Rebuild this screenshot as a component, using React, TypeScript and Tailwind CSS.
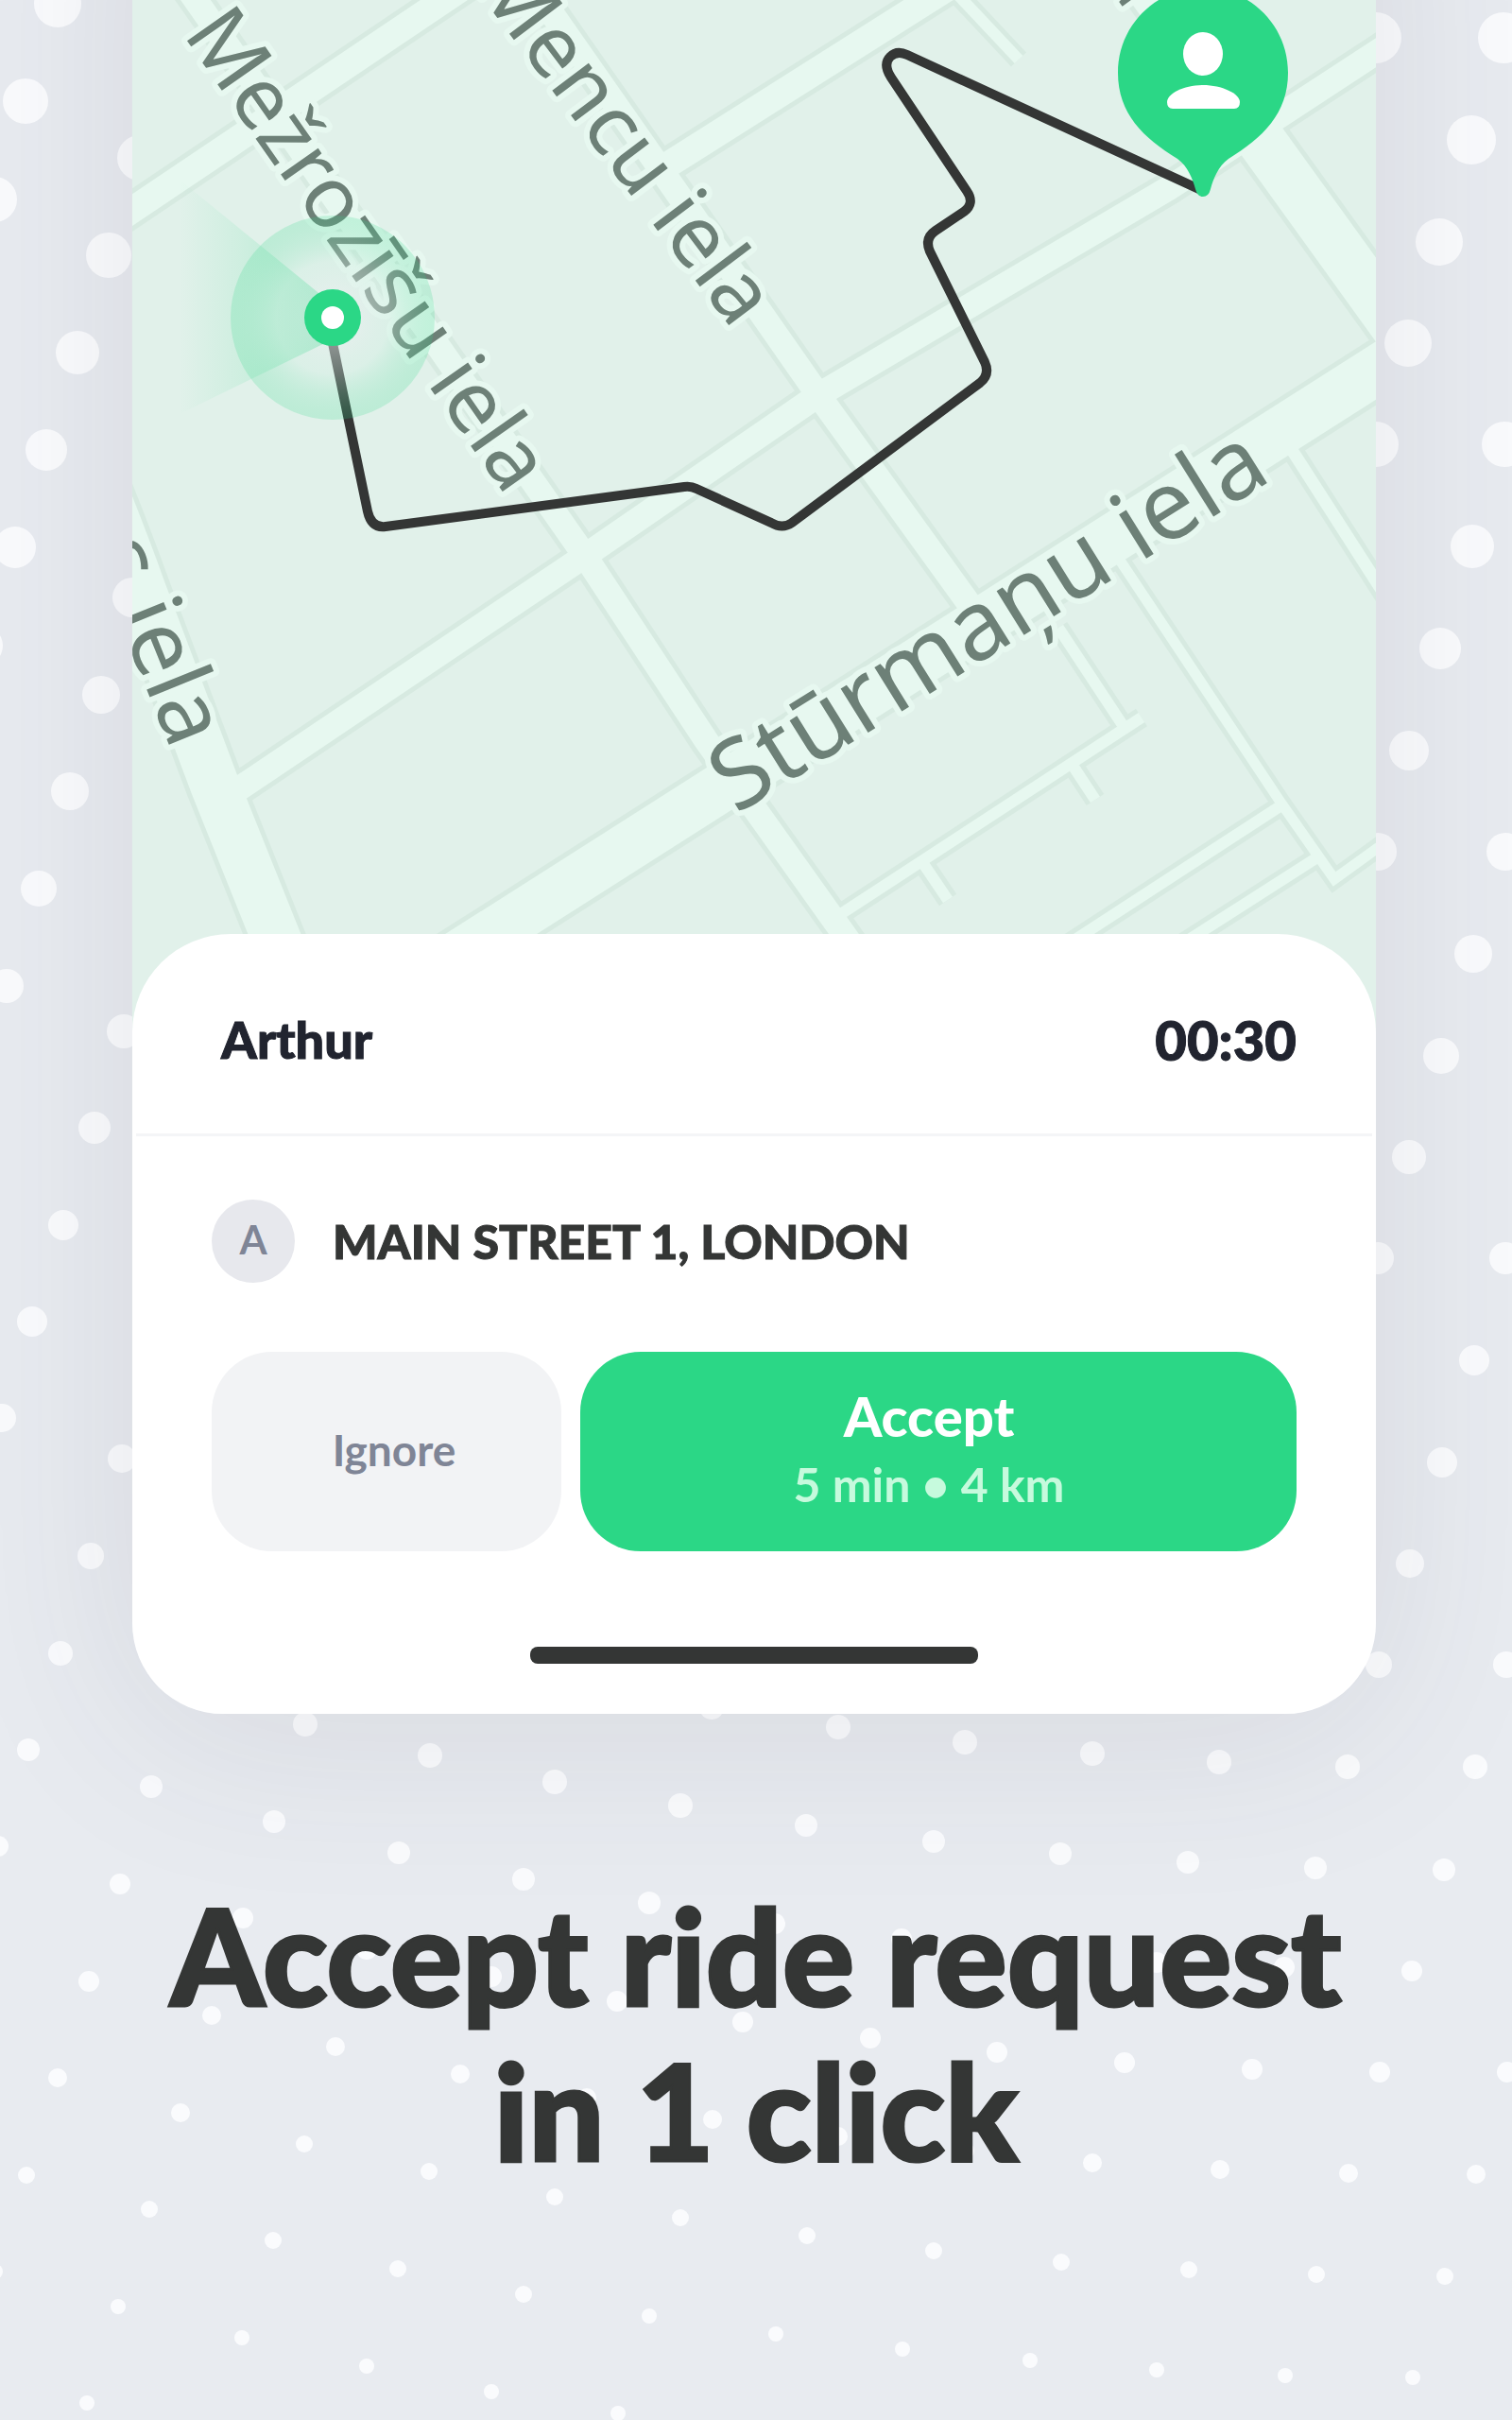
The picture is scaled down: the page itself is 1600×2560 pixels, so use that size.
import type { ReactNode } from "react";

type Dot = [x: number, y: number, r: number];

const DOTS: Dot[] = [
  // left margin
  [61, 4, 25], [27, 107, 24], [-6, 211, 24], [148, 167, 24], [115, 270, 24],
  [82, 373, 23], [49, 476, 22], [16, 579, 22], [140, 632, 21], [-18, 683, 21],
  [107, 735, 20], [74, 837, 20], [41, 940, 19], [7, 1043, 18], [131, 1091, 18],
  [100, 1193, 17], [67, 1296, 16], [34, 1398, 16], [2, 1500, 15], [129, 1543, 15],
  [96, 1646, 14], [64, 1749, 13],
  // right margin
  [1456, 40, 27], [1591, 40, 27], [1557, 148, 26], [1523, 256, 25], [1490, 363, 25],
  [1456, 470, 24], [1592, 470, 24], [1558, 578, 23], [1524, 686, 22], [1491, 794, 21],
  [1458, 901, 20], [1593, 901, 20], [1559, 1009, 20], [1525, 1117, 19], [1491, 1224, 18],
  [1458, 1331, 17], [1593, 1331, 17], [1560, 1439, 16], [1526, 1547, 16], [1492, 1654, 15],
  [1459, 1761, 14], [1594, 1761, 14],
  // below the phone
  [30, 1851, 12], [160, 1890, 12], [290, 1927, 12], [422, 1960, 12], [554, 1988, 12],
  [687, 2013, 12], [820, 2035, 11], [954, 2051, 11], [1089, 2065, 11], [1224, 2076, 11],
  [1359, 2081, 11], [1494, 2085, 11],
  [323, 1824, 13], [455, 1857, 13], [587, 1885, 13], [720, 1910, 13], [853, 1931, 12],
  [988, 1948, 12], [1122, 1961, 12], [1257, 1970, 12], [1392, 1976, 12], [1528, 1978, 12],
  [753, 1806, 13], [887, 1827, 13], [1021, 1843, 13], [1156, 1855, 13], [1290, 1864, 13],
  [1426, 1869, 13], [1561, 1869, 13],
  [-2, 1953, 11], [127, 1993, 11], [257, 2029, 11], [388, 2062, 11], [520, 2091, 11],
  [653, 2117, 11], [786, 2139, 11], [921, 2156, 11], [1055, 2171, 11], [1190, 2182, 11],
  [1325, 2189, 11], [1460, 2192, 11], [1595, 2192, 11],
  [94, 2096, 11], [224, 2132, 10], [355, 2165, 10], [487, 2194, 10], [621, 2219, 10],
  [754, 2242, 10], [887, 2260, 10], [1021, 2275, 10], [1156, 2288, 10], [1291, 2295, 10],
  [1427, 2299, 10], [1562, 2300, 10],
  [61, 2198, 10], [191, 2235, 10], [322, 2268, 9], [454, 2297, 9], [587, 2324, 9],
  [720, 2346, 9], [854, 2365, 9], [988, 2381, 9], [1123, 2393, 9], [1258, 2401, 9],
  [1393, 2406, 9], [1529, 2408, 9],
  [28, 2301, 9], [158, 2337, 9], [289, 2370, 9], [421, 2400, 9], [554, 2427, 9],
  [687, 2450, 8], [821, 2469, 8], [955, 2485, 8], [1090, 2497, 8], [1224, 2507, 8],
  [1360, 2513, 8], [1495, 2515, 8],
  [-5, 2403, 8], [125, 2440, 8], [256, 2473, 8], [388, 2503, 8], [520, 2530, 8],
  [654, 2553, 8], [92, 2542, 8],
];

const ROADS = [
  { d: "M1000 -20 L1078 63", width: 12 },
  { d: "M1360 465 L1480 652", width: 13 },
  { d: "M1180 585 L1356 850 L1412 930 L1480 881", width: 11 },
  { d: "M1356 852 L1110 1012", width: 12 },
  { d: "M1394 907 L1230 1012", width: 12 },
  { d: "M1208 759 L885 970", width: 12 },
  { d: "M1120 664 L1188 767", width: 12 },
  { d: "M1134 808 L1159 846", width: 12 },
  { d: "M976 912 L1003 952", width: 12 },
  { d: "M60 276 L510 -27", width: 28 },
  { d: "M690 185 L1030 -30", width: 28 },
  { d: "M67 -200 L207 0 L619 588 L747 783 L910 1012", width: 26 },
  { d: "M434 -200 L574 0 L866 418 L1030 645", width: 26 },
  { d: "M240 843 L619 588 L866 418 L1237 199 L1370 112 L1480 40", width: 26 },
  { d: "M1082 -200 L1227 0 L1337 152 L1500 378", width: 52 },
  { d: "M60 400 Q116 530 150 625 L227 830 L300 1012", width: 52 },
  { d: "M460 1026 L1500 364", width: 52 },
];

const LABELS = [
  { text: "Mežrozīšu iela", x: 193, y: 36, angle: 55, size: 90 },
  { text: "Mencu iela", x: 500, y: -16, angle: 53, size: 90 },
  { text: "iela", x: 1105, y: -107, angle: 54, size: 90 },
  { text: "s iela", x: 96, y: 583, angle: 68, size: 96 },
  { text: "Stūrmaņu iela", x: 779, y: 862, angle: -32, size: 102 },
];

const ROUTE =
  "M352 363 L389 541 Q393 559 408 557 L724 515 Q731 514 737 517 L816 553 Q828 560 838 553 L1037 405 Q1048 396 1042 383 L984 266 Q978 252 990 244 L1020 224 Q1032 215 1023 202 L943 82 Q934 68 942 60 Q949 53 960 58 L1275 203";

function Backdrop() {
  return (
    <svg
      viewBox="0 0 1600 2560"
      preserveAspectRatio="xMidYMin slice"
      className="absolute inset-0 h-full w-full fill-[#fafbfd]"
      aria-hidden="true"
    >
      {DOTS.map(([x, y, r]) => (
        <circle key={`${x}-${y}`} cx={x} cy={y} r={r} />
      ))}
    </svg>
  );
}

function RideMap() {
  return (
    <svg
      viewBox="140 -200 1316 1300"
      className="block h-auto w-full bg-[#e1f1ea]"
      role="img"
      aria-label="Route to the passenger"
    >
      <defs>
        <radialGradient id="halo">
          <stop offset="0.1" stopColor="#f1eef3" stopOpacity="0.6" />
          <stop offset="0.55" stopColor="#d0eee2" stopOpacity="0.35" />
          <stop offset="1" stopColor="#2bd786" stopOpacity="0.2" />
        </radialGradient>
        <linearGradient id="cone" x1="1" x2="0">
          <stop offset="0" stopColor="#2bd786" stopOpacity="0.28" />
          <stop offset="0.6" stopColor="#2bd786" stopOpacity="0.1" />
          <stop offset="1" stopColor="#2bd786" stopOpacity="0" />
        </linearGradient>
      </defs>

      <g fill="none" stroke="#d7eae1">
        {ROADS.map(({ d, width }) => (
          <path key={d} d={d} strokeWidth={width + 10} />
        ))}
      </g>
      <g fill="none" stroke="#e7f8f0">
        {ROADS.map(({ d, width }) => (
          <path key={d} d={d} strokeWidth={width} />
        ))}
      </g>

      <g
        fill="#6d8077"
        stroke="#e7f8f0"
        strokeWidth="12"
        strokeLinejoin="round"
        className="font-['Noto_Sans',sans-serif] [paint-order:stroke]"
      >
        {LABELS.map(({ text, x, y, angle, size }) => (
          <text
            key={`${text}-${x}`}
            fontSize={size}
            transform={`translate(${x} ${y}) rotate(${angle})`}
          >
            {text}
          </text>
        ))}
      </g>

      <path d={ROUTE} fill="none" stroke="#343635" strokeWidth="10" />

      {/* driver position */}
      <circle cx="352" cy="336" r="108" fill="url(#halo)" />
      <path d="M352 322 L190 190 L190 438 L352 359 Z" fill="url(#cone)" />
      <circle cx="352" cy="336" r="30" fill="#2bd786" />
      <circle cx="352" cy="336" r="12" fill="#fff" />

      {/* passenger pin */}
      <path
        d="M1273 -13 C1323 -13 1363 27 1363 77 C1363 120 1336 146 1300 168 C1289 176 1284 189 1281 200 Q1279 208 1273 208 Q1267 208 1265 200 C1262 189 1257 176 1246 168 C1210 146 1183 120 1183 77 C1183 27 1223 -13 1273 -13 Z"
        fill="#2bd786"
      />
      <ellipse cx="1273" cy="57" rx="21" ry="23" fill="#fff" />
      <path
        d="M1241 115 Q1235 115 1235 108 C1235 99 1253 90 1273 90 C1293 90 1312 99 1312 108 Q1312 115 1306 115 Z"
        fill="#fff"
      />
    </svg>
  );
}

function Badge({ children }: { children: ReactNode }) {
  return (
    <span className="flex size-22 shrink-0 items-center justify-center rounded-full bg-[#e7e8ed] pb-1 text-[42px] font-bold text-[#7f8596]">
      {children}
    </span>
  );
}

function RequestCard() {
  return (
    <section className="relative -mt-28 rounded-t-[104px] rounded-b-[96px] bg-white">
      <header className="mx-1 flex h-[214px] items-center justify-between border-b-3 border-[#f4f5f7] pt-3 pr-20 pl-[90px] font-black text-[#21242f] [-webkit-text-stroke:1px]">
        <h2 className="text-[54px]">Arthur</h2>
        <time className="text-[58px]">00:30</time>
      </header>

      <div className="px-21 pt-[67px] pb-[53px]">
        <div className="flex items-center gap-10">
          <Badge>A</Badge>
          <p className="text-[50px] font-black text-[#343635] [-webkit-text-stroke:1px]">
            MAIN STREET 1, LONDON
          </p>
        </div>

        <div className="mt-[73px] flex gap-5">
          <button
            type="button"
            className="h-[211px] w-[370px] shrink-0 rounded-[64px] bg-[#f2f3f5] pb-1 pl-4 text-[46px] font-bold text-[#7f8596]"
          >
            Ignore
          </button>
          <button
            type="button"
            className="flex h-[211px] flex-1 flex-col items-center justify-center rounded-[64px] bg-[#2bd786] pr-5 pb-1"
          >
            <span className="text-[58px] leading-[72px] font-black text-white">
              Accept
            </span>
            <span className="text-[50px] leading-[72px] font-bold text-[#c6fadd]">
              5 min • 4 km
            </span>
          </button>
        </div>

        <div className="mx-auto mt-[101px] h-[18px] w-[474px] rounded-lg bg-[#343635]" />
      </div>
    </section>
  );
}

export default function App() {
  return (
    <main className="relative flex min-h-screen flex-col overflow-hidden bg-[#e8ebf0] font-['Lato',sans-serif]">
      <Backdrop />

      <div className="relative -mt-50 mr-36 ml-35 rounded-b-[96px] shadow-[0_20px_200px_rgba(60,62,80,0.1)]">
        <RideMap />
        <RequestCard />
      </div>

      <h1 className="relative mt-[172px] text-center text-[142px] leading-[164px] font-black text-[#343635] [-webkit-text-stroke:3px]">
        Accept ride request
        <br />
        in 1 click
      </h1>
    </main>
  );
}
